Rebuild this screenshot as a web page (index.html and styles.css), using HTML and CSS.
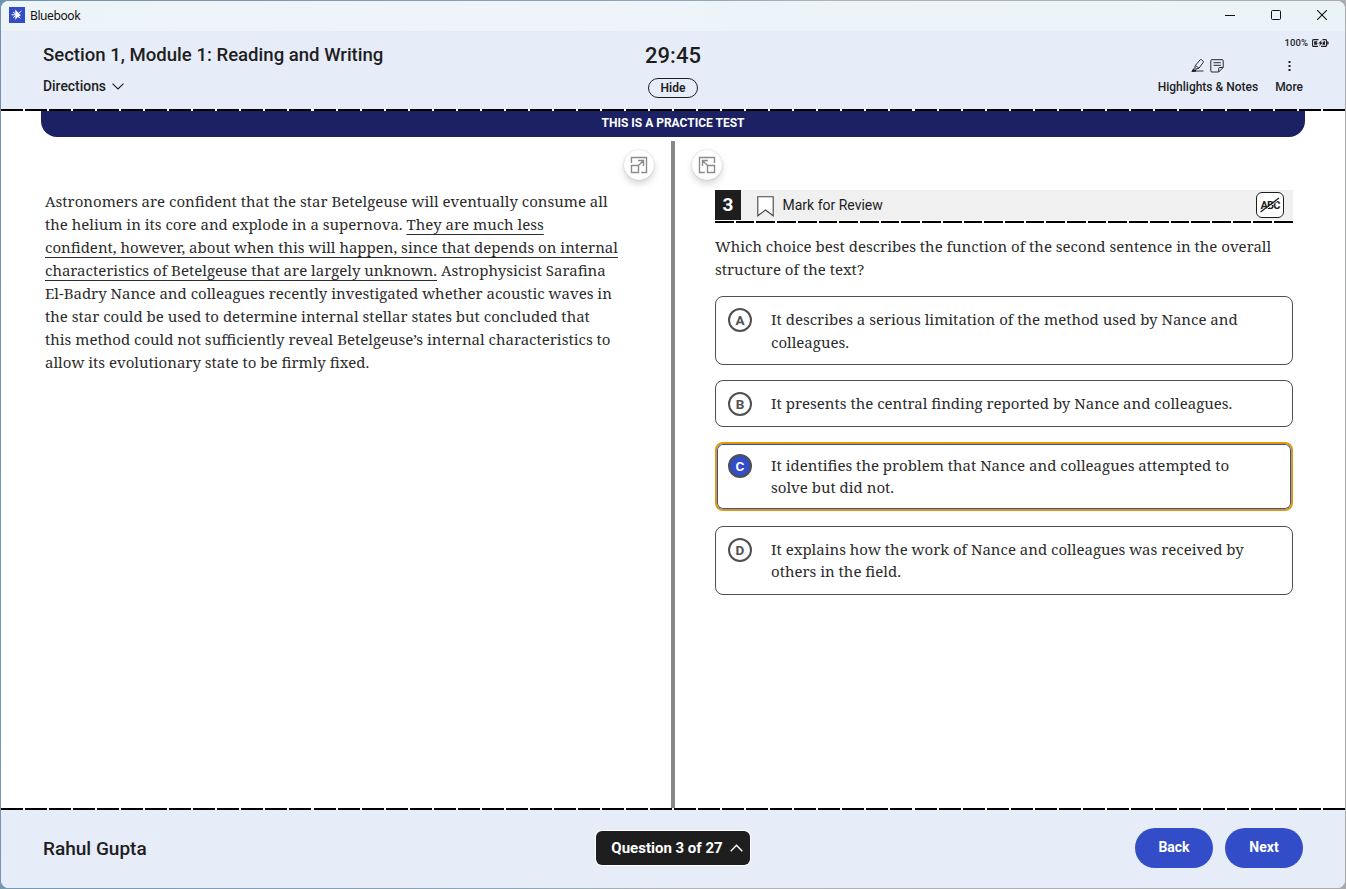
FILE: index.html
```html
<!DOCTYPE html>
<html lang="en">
<head>
<meta charset="utf-8">
<title>Bluebook</title>
<link rel="stylesheet" href="styles.css">
</head>
<body>
<div class="window">
  <div class="titlebar">
    <svg class="app-icon" width="16" height="16" viewBox="0 0 16 16"><rect width="16" height="16" fill="#324dc7"/><path d="M6.2 2.6 12 8.6 9.8 9 12 12 8.6 10 6.4 13Z" fill="#fff"/><path d="M2.6 7.8H7M9 7 12.4 4M4 5 6.5 7M4.2 10.6 6.6 8.8" stroke="#fff" stroke-width="1"/></svg>
    <span class="app-name">Bluebook</span>
    <div class="window-controls">
      <svg width="10" height="11" viewBox="0 0 10 11"><path d="M0 5.5H10" stroke="#111"/></svg>
      <svg width="10" height="10" viewBox="0 0 10 10"><rect x=".5" y=".5" width="9" height="9" rx="1" fill="none" stroke="#111"/></svg>
      <svg width="10" height="10" viewBox="0 0 10 10"><path d="M0 0 10 10M10 0 0 10" stroke="#111" stroke-width="1.1"/></svg>
    </div>
  </div>
  <header class="header">
    <div class="header-left">
      <div class="section-title">Section 1, Module 1: Reading and Writing</div>
      <div class="directions">Directions <svg width="12" height="7" viewBox="0 0 12 7"><path d="M.5.6 6 6 11.5.6" fill="none" stroke="#1e1e1e" stroke-width="1.1"/></svg></div>
    </div>
    <div class="header-center">
      <div class="timer">29:45</div>
      <div class="hide">Hide</div>
    </div>
    <div class="header-right">
      <div class="battery">100%
        <svg width="17" height="8" viewBox="0 0 17 8"><path d="M6.5.6H1.6Q.6.6.6 1.6v4.8q0 1 1 1H6M10.5.6H13.5q1 0 1 1v4.8q0 1-1 1H9" fill="none" stroke="#1e1e1e" stroke-width="1.1"/><path d="M2.2 2.2H5.5L4.3 3.8H5.8L4.8 5.8H2.2ZM9.8.9 6.2 4.6H8.1L7 7.2 11 3.4H9ZM11.6 2.2H13V5.8H10.2ZM15.2 2.3h.5q1 0 1 1.7t-1 1.7H15.2Z" fill="#1e1e1e"/></svg>
      </div>
      <div class="tools">
        <div class="tool">
          <div class="tool-icons">
            <svg width="14" height="15" viewBox="0 0 14 15"><path d="M4.4 7.4 9.2 1.8q.6-.7 1.3-.1l1.6 1.4q.6.6.1 1.3L8 10.2 5.3 10.8 3.8 9.5ZM4.4 7.4 8 10.2M3.8 9.5 1.2 13H4L5.3 10.8" fill="none" stroke="#1e1e1e" stroke-width=".9"/><path d="M.8 13.4 2.5 11.3 4.4 12.5V13.4ZM4 13H12.5" fill="#1e1e1e" stroke="#1e1e1e" stroke-width=".9"/></svg>
            <svg width="14" height="14" viewBox="0 0 14 14"><path d="M1.8.7H12.2q1 0 1 1V8.4L8.7 13H1.8q-1 0-1-1V1.7q0-1 1-1ZM13 8.5H9.7q-1 0-1 1V12.8M3.5 3.7H10.8M3.5 6.3H10.8" fill="none" stroke="#1e1e1e" stroke-width=".95"/></svg>
          </div>
          <div>Highlights &amp; Notes</div>
        </div>
        <div class="tool">
          <div class="tool-icons"><svg width="4" height="12" viewBox="0 0 4 12"><path d="M1.5 1h2v2h-2ZM1.5 5h2v2h-2ZM1.5 9h2v2h-2Z" fill="#1e1e1e"/></svg></div>
          <div>More</div>
        </div>
      </div>
    </div>
  </header>
  <div class="dashes"></div>
  <div class="banner">THIS IS A PRACTICE TEST</div>
  <main class="content">
    <section class="pane pane-left">
      <div class="expand"><svg width="18" height="18" viewBox="0 0 18 18"><path d="M1.5 7V1.5H16.5V16.5H11.2M1.5 9.5H8.5V16.5H1.5ZM8 10 13 5M8 4.5H13.5V10" fill="none" stroke="#8b8b8b" stroke-width="1.4"/></svg></div>
      <p class="passage">
        <span class="line">Astronomers are confident that the star Betelgeuse will eventually consume all</span>
        <span class="line">the helium in its core and explode in a supernova. <u>They are much less</u></span>
        <span class="line"><u>confident, however, about when this will happen, since that depends on internal</u></span>
        <span class="line"><u>characteristics of Betelgeuse that are largely unknown.</u> Astrophysicist Sarafina</span>
        <span class="line">El-Badry Nance and colleagues recently investigated whether acoustic waves in</span>
        <span class="line">the star could be used to determine internal stellar states but concluded that</span>
        <span class="line">this method could not sufficiently reveal Betelgeuse’s internal characteristics to</span>
        <span class="line">allow its evolutionary state to be firmly fixed.</span>
      </p>
    </section>
    <div class="divider"></div>
    <section class="pane pane-right">
      <div class="expand"><svg width="18" height="18" viewBox="0 0 18 18"><path d="M16.5 7V1.5H1.5V16.5H6.8M16.5 9.5H9.5V16.5H16.5ZM10 10 5 5M10 4.5H4.5V10" fill="none" stroke="#8b8b8b" stroke-width="1.4"/></svg></div>
      <div class="question-bar">
        <div class="number">3</div>
        <svg class="bookmark" width="17" height="21" viewBox="0 0 17 21"><path d="M.8.8H16.2V19.8L8.5 14 .8 19.8Z" fill="#fff" stroke="#444" stroke-width="1.1"/></svg>
        <span class="mark">Mark for Review</span>
        <div class="abc"><span>ABC</span><svg width="22" height="18" viewBox="0 0 22 18"><path d="M2 17.2 20.5 3" stroke="#fff" stroke-width="1"/><path d="M1.5 16 20 2" stroke="#1e1e1e" stroke-width="1.3"/></svg></div>
      </div>
      <div class="dashes dashes-short"></div>
      <p class="prompt">
        <span class="line">Which choice best describes the function of the second sentence in the overall</span>
        <span class="line">structure of the text?</span>
      </p>
      <div class="options">
        <div class="option"><span class="letter">A</span><p class="loose"><span class="line">It describes a serious limitation of the method used by Nance and</span><span class="line">colleagues.</span></p></div>
        <div class="option"><span class="letter">B</span><p><span class="line">It presents the central finding reported by Nance and colleagues.</span></p></div>
        <div class="option selected"><span class="letter">C</span><p><span class="line">It identifies the problem that Nance and colleagues attempted to</span><span class="line">solve but did not.</span></p></div>
        <div class="option"><span class="letter">D</span><p><span class="line">It explains how the work of Nance and colleagues was received by</span><span class="line">others in the field.</span></p></div>
      </div>
    </section>
  </main>
  <div class="dashes"></div>
  <footer class="footer">
    <div class="student">Rahul Gupta</div>
    <div class="navigator">Question 3 of 27 <svg width="13" height="8" viewBox="0 0 13 8"><path d="M.7 7.3 6.5 1.2 12.3 7.3" fill="none" stroke="#fff" stroke-width="1.4"/></svg></div>
    <div class="nav-buttons"><div class="pill">Back</div><div class="pill">Next</div></div>
  </footer>
</div>
</body>
</html>
```
FILE: styles.css
```css
* { box-sizing: border-box; }
body { margin: 0; padding: 1px; width: 1346px; height: 889px; overflow: hidden; background: linear-gradient(100deg, #6f93ad 0%, #8ea5b4 45%, #b0b4b8 55%, #aaa 100%); font-family: Roboto, "Open Sans", sans-serif; color: #1e1e1e; }
p { margin: 0; }
svg { display: block; flex: none; }
.window { width: 1344px; height: 887px; border-radius: 8px; overflow: hidden; background: #fff; display: flex; flex-direction: column; }
.titlebar { height: 30px; flex: none; background: linear-gradient(90deg, #edf4f8, #eef4f9 40%, #eaf4f6); display: flex; align-items: center; padding: 0 18px 2px 8px; }
.app-name { font: 12px "Noto Sans", sans-serif; margin-left: 5px; color: #111; letter-spacing: -.4px; }
.window-controls { margin-left: auto; display: flex; gap: 36px; align-items: center; }
.header { height: 78px; flex: none; background: #e6ecf8; display: grid; grid-template-columns: 1fr 60px 1fr; }
.header-left { padding: 12px 0 0 42px; }
.section-title { font-size: 18.57px; line-height: 24px; font-weight: 500; }
.directions { display: flex; align-items: center; gap: 6px; margin-top: 9px; font-size: 13.9px; line-height: 20px; font-weight: 500; }
.header-center { display: flex; flex-direction: column; align-items: center; padding-top: 11px; }
.timer { font-size: 22px; line-height: 28px; font-weight: 500; }
.hide { width: 50px; height: 20px; margin-top: 8px; border: 1px solid #1e1e1e; border-radius: 10px; font-size: 12px; line-height: 18px; font-weight: 600; text-align: center; }
.header-right { display: flex; flex-direction: column; align-items: flex-end; }
.battery { display: flex; gap: 4px; align-items: center; font-size: 9.5px; line-height: 12px; font-weight: 500; padding: 6px 16px 0 0; letter-spacing: .1px; }
.tools { display: flex; gap: 17px; margin: 9px 42px 0 0; font-size: 12px; font-weight: 500; line-height: 17px; }
.tool { display: flex; flex-direction: column; align-items: center; gap: 6px; }
.tool-icons { height: 15px; display: flex; align-items: center; gap: 5px; }
.dashes { height: 2px; flex: none; background: repeating-linear-gradient(90deg, #000 0 22px, #fff 22px 24.04px); }
.dashes-short { background: repeating-linear-gradient(90deg, #000 0 18.7px, #fff 18.7px 20.71px); }
.banner { height: 26px; flex: none; margin: 0 40px; border-radius: 0 0 16px 16px; background: #1b2163; color: #fff; text-align: center; font-size: 12px; line-height: 24px; font-weight: 700; }
.content { flex: 1; display: grid; grid-template-columns: 670px 4px 1fr; }
.divider { background: #888; margin-top: 4px; }
.pane-left { padding: 13px 17px 0 44px; }
.pane-right { padding: 13px 52px 0 40px; }
.expand { width: 30px; height: 30px; border-radius: 50%; background: #fff; box-shadow: 0 0 2px rgba(0,0,0,.2), 0 4px 7px rgba(0,0,0,.16); display: grid; place-items: center; }
.pane-left .expand { margin-left: auto; }
.pane-right .expand { margin-left: -23px; }
.passage, .prompt, .option p { font-family: "Noto Serif", "DejaVu Serif", serif; font-stretch: condensed; font-size: 15px; color: #2c2c2c; }
.passage { margin-top: 10px; line-height: 23px; }
.line { display: block; white-space: nowrap; width: max-content; }
u { text-underline-offset: 4px; text-decoration-thickness: 1px; text-decoration-skip-ink: none; }
.question-bar { height: 31px; margin-top: 10px; background: #f0f0f0; border-bottom: 1px solid #fff; display: flex; align-items: center; padding-right: 9px; }
.number { align-self: flex-start; width: 26px; height: 30px; background: #1e1e1e; color: #fff; font-size: 19px; font-weight: 700; line-height: 30px; text-align: center; }
.bookmark { margin: 2px 0 0 16px; }
.mark { margin-left: 8.5px; font-size: 14px; }
.abc { width: 28px; height: 26px; margin-left: auto; border: 1px solid #1e1e1e; border-radius: 6px; background: #fff; display: grid; place-items: center; font-size: 11px; font-weight: 700; letter-spacing: -.9px; }
.abc > * { grid-area: 1 / 1; }
.prompt { margin-top: 12px; line-height: 23px; }
.options { display: grid; grid-template-rows: 69px 47px 69px 69px; gap: 15px; margin-top: 15px; }
.option { display: flex; border: 1px solid #505050; border-radius: 8px; padding: 11px 12px; }
.option p { line-height: 22.4px; margin-left: 19px; }
.option .loose { line-height: 23px; }
.letter { flex: none; width: 24px; height: 24px; border: 2px solid #505050; border-radius: 50%; color: #505050; font-size: 13.5px; line-height: 21px; font-weight: 700; text-align: center; }
.selected { border: 2px solid #e09900; box-shadow: inset 0 0 0 1px #324dc7; padding: 10px 11px; }
.selected .letter { background: #324dc7; color: #fff; }
.footer { height: 78px; flex: none; background: #e6ecf8; display: grid; grid-template-columns: 1fr 154px 1fr; align-items: center; padding: 0 42px 2px; }
.student { font-size: 19px; font-weight: 500; }
.navigator { height: 34px; border-radius: 6px; background: #1e1e1e; box-shadow: 0 0 0 1px #fff; color: #fff; display: flex; align-items: center; justify-content: center; gap: 7px; padding-left: 8px; font-size: 15px; font-weight: 700; }
.nav-buttons { display: flex; justify-content: flex-end; gap: 12px; }
.pill { width: 78px; height: 40px; border-radius: 20px; background: #324dc7; color: #fff; font-size: 14px; line-height: 39px; font-weight: 700; text-align: center; }
```
